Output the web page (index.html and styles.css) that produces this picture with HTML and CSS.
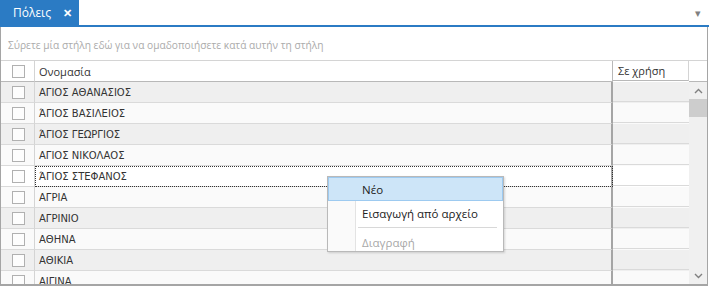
FILE: index.html
```html
<!DOCTYPE html>
<html lang="el">
<head>
    <meta charset="UTF-8">
    <title>Πόλεις</title>
    <link rel="stylesheet" href="styles.css">
</head>
<body>
    <div class="tabbar">
        <div class="tab">Πόλεις <span class="tab-close">✕</span></div>
        <div class="tab-menu">▾</div>
    </div>
    <div class="grid">
        <div class="group-panel">Σύρετε μία στήλη εδώ για να ομαδοποιήσετε κατά αυτήν τη στήλη</div>
        <div class="row header">
            <div class="cell chk"><span class="box"></span></div>
            <div class="cell name">Ονομασία</div>
            <div class="cell use">Σε χρήση</div>
            <div class="cell corner"></div>
        </div>
        <div class="body">
            <div class="rows">
                <div class="row odd"><div class="cell chk"><span class="box"></span></div><div class="cell name">ΑΓΙΟΣ ΑΘΑΝΑΣΙΟΣ</div><div class="cell use"></div></div>
                <div class="row"><div class="cell chk"><span class="box"></span></div><div class="cell name">ΆΓΙΟΣ ΒΑΣΙΛΕΙΟΣ</div><div class="cell use"></div></div>
                <div class="row odd"><div class="cell chk"><span class="box"></span></div><div class="cell name">ΆΓΙΟΣ ΓΕΩΡΓΙΟΣ</div><div class="cell use"></div></div>
                <div class="row"><div class="cell chk"><span class="box"></span></div><div class="cell name">ΑΓΙΟΣ ΝΙΚΟΛΑΟΣ</div><div class="cell use"></div></div>
                <div class="row focused"><div class="cell chk"><span class="box"></span></div><div class="cell name">ΆΓΙΟΣ ΣΤΕΦΑΝΟΣ</div><div class="cell use"></div></div>
                <div class="row"><div class="cell chk"><span class="box"></span></div><div class="cell name">ΑΓΡΙΑ</div><div class="cell use"></div></div>
                <div class="row odd"><div class="cell chk"><span class="box"></span></div><div class="cell name">ΑΓΡΙΝΙΟ</div><div class="cell use"></div></div>
                <div class="row"><div class="cell chk"><span class="box"></span></div><div class="cell name">ΑΘΗΝΑ</div><div class="cell use"></div></div>
                <div class="row odd"><div class="cell chk"><span class="box"></span></div><div class="cell name">ΑΘΙΚΙΑ</div><div class="cell use"></div></div>
                <div class="row"><div class="cell chk"><span class="box"></span></div><div class="cell name">ΑΙΓΙΝΑ</div><div class="cell use"></div></div>
            </div>
            <div class="vscroll">
                <div class="arrow">
                    <svg width="9" height="6" viewBox="0 0 9 6"><path d="M1 5 L4.5 1.5 L8 5" fill="none" stroke="#808080" stroke-width="1.4"/></svg>
                </div>
                <div class="thumb"></div>
                <div class="track"></div>
                <div class="arrow">
                    <svg width="9" height="6" viewBox="0 0 9 6"><path d="M1 1 L4.5 4.5 L8 1" fill="none" stroke="#808080" stroke-width="1.4"/></svg>
                </div>
            </div>
        </div>
    </div>

    <div class="context-menu">
        <div class="menu-item active">Νέο</div>
        <div class="menu-item">Εισαγωγή από αρχείο</div>
        <div class="menu-sep"></div>
        <div class="menu-item disabled">Διαγραφή</div>
    </div>
</body>
</html>
```

FILE: styles.css
```css
body {
    margin: 0;
    width: 709px;
    height: 288px;
    background-color: #ffffff;
    font-family: "Open Sans", "Noto Sans", sans-serif;
    overflow: hidden;
    position: relative;
}
.tabbar {
    display: flex;
    justify-content: space-between;
    height: 25px;
    border-bottom: 2px solid #2b7bc4;
}
.tab {
    width: 79px;
    background-color: #2b7bc4;
    color: white;
    font-size: 12px;
    line-height: 25px;
    padding-left: 13px;
    box-sizing: border-box;
}
.tab-close {
    font-size: 11px;
    font-weight: bold;
    margin-left: 9px;
}
.tab-menu {
    color: #808080;
    font-size: 11px;
    line-height: 25px;
    padding-right: 8px;
}
.grid {
    width: 708px;
    height: 259px;
    border-left: 1px solid #a5a5a5;
    border-right: 1px solid #a5a5a5;
    border-bottom: 2px solid #a5a5a5;
    box-sizing: border-box;
    overflow: hidden;
}
.group-panel {
    height: 33px;
    line-height: 37px;
    padding-left: 7px;
    font-size: 10.2px;
    color: #ababab;
    border-bottom: 1px solid #d4d4d4;
}
.row {
    display: flex;
    height: 21px;
    background-color: #fafafa;
}
.row.odd {
    background-color: #efefef;
}
.cell {
    height: 20px;
    border-bottom: 1px solid #dadada;
    display: flex;
    align-items: center;
    font-family: "DejaVu Sans", Tahoma, sans-serif;
    font-size: 10px;
    color: #333;
}
.chk {
    width: 33px;
    flex: none;
    justify-content: center;
    border-right: 1px solid #d4d4d4;
}
.box {
    width: 11px;
    height: 11px;
    border: 1px solid #b0b0b0;
    background-color: #fdfdfd;
    margin-left: 2px;
}
.name {
    width: 572px;
    flex: none;
    padding-left: 4px;
    border-right: 2px solid #a5a5a5;
}
.use {
    width: 76px;
    flex: none;
    padding-left: 5px;
    box-sizing: border-box;
}
.header {
    background-color: #ffffff;
}
.header .cell {
    font-family: "Open Sans", "Noto Sans", sans-serif;
    font-size: 11px;
    color: #333;
    border-bottom-color: #b8b8b8;
}
.header .name {
    border-right: 1px solid #b8b8b8;
    width: 573px;
}
.header .use {
    border-right: 1px solid #d4d4d4;
}
.corner {
    flex: 1;
}
.focused .name {
    outline: 1px dotted #333;
    outline-offset: -1px;
    background-color: #ffffff;
}
.focused {
    background-color: #ffffff;
}
.body {
    display: flex;
}
.rows {
    width: 688px;
    flex: none;
}
.vscroll {
    flex: 1;
    background-color: #f0f0f0;
    display: flex;
    flex-direction: column;
    height: 202px;
}
.arrow {
    height: 17px;
    display: flex;
    align-items: center;
    justify-content: center;
}
.thumb {
    height: 18px;
    background-color: #cdcdcd;
}
.track {
    flex: 1;
}
.context-menu {
    position: absolute;
    left: 327px;
    top: 176px;
    width: 177px;
    height: 76px;
    box-sizing: border-box;
    border: 1px solid #b9b9b9;
    background: linear-gradient(to right, #fafafa 0, #fafafa 27px, #e3e3e3 27px, #e3e3e3 28px, #ffffff 28px);
    box-shadow: 1px 1px 2px rgba(0,0,0,0.15);
    font-size: 11.5px;
}
.menu-item {
    height: 24px;
    line-height: 24px;
    padding-left: 33px;
    color: #222;
    box-sizing: border-box;
    border: 1px solid transparent;
}
.menu-item.active {
    background-color: #cde5f8;
    border-color: #9dcaf0;
}
.menu-item.disabled {
    color: #a8a8a8;
}
.menu-sep {
    height: 1px;
    background-color: #d8d8d8;
    margin: 2px 6px 2px 30px;
}
```
